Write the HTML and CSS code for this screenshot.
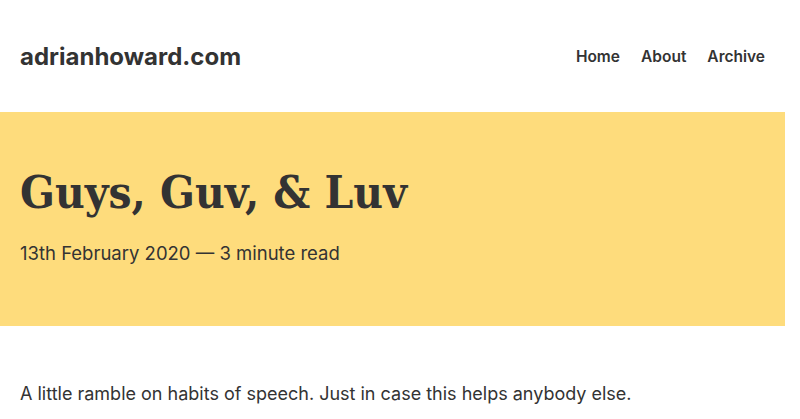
FILE: index.html
```html
<!DOCTYPE html>
<html lang="en">
<head>
<meta charset="utf-8">
<title>Guys, Guv, &amp; Luv</title>
<link rel="stylesheet" href="styles.css">
</head>
<body>
<div class="page">
  <header class="site-header">
    <a class="site-title" href="#">adrianhoward.com</a>
    <nav class="site-nav">
      <a href="#">Home</a>
      <a href="#">About</a>
      <a href="#">Archive</a>
    </nav>
  </header>
  <section class="hero">
    <h1 class="post-title">Guys, Guv, &amp; Luv</h1>
    <p class="post-meta">13th February 2020 — 3 minute read</p>
  </section>
  <main class="content">
    <p class="lede">A little ramble on habits of speech. Just in case this helps anybody else.</p>
  </main>
</div>
</body>
</html>
```
FILE: styles.css
```css
html, body {
  margin: 0;
  padding: 0;
  background: #fff;
}
body {
  font-family: Inter, "Liberation Sans", sans-serif;
  color: #333;
  overflow: hidden;
}
.page {
  width: 785px;
}
.site-header {
  height: 112px;
  display: flex;
  align-items: center;
  justify-content: space-between;
  padding: 0 20px;
  box-sizing: border-box;
}
.site-title {
  font-size: 24px;
  font-weight: 700;
  color: #333;
  text-decoration: none;
}
.site-nav {
  display: flex;
  gap: 21px;
}
.site-nav a {
  font-size: 15.5px;
  font-weight: 600;
  color: #333;
  text-decoration: none;
}
.hero {
  background: #fedc7c;
  height: 214px;
  padding: 50px 20px 0;
  box-sizing: border-box;
}
.post-title {
  margin: 0;
  font-family: "DejaVu Serif", serif;
  font-stretch: condensed;
  font-weight: 700;
  font-size: 45.5px;
  line-height: 60px;
}
.post-meta {
  margin: 17px 0 0;
  font-size: 18.5px;
  line-height: 28px;
}
.content {
  padding: 54px 20px 0;
}
.lede {
  margin: 0;
  font-size: 18px;
  line-height: 28px;
}
```
